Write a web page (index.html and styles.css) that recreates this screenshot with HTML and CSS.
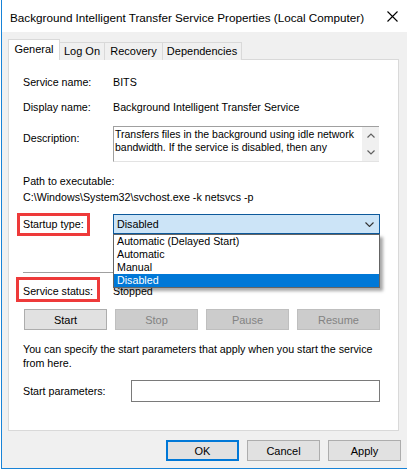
FILE: index.html
```html
<!DOCTYPE html>
<html>
<head>
<meta charset="utf-8">
<link rel="stylesheet" href="styles.css">
</head>
<body>
<div class="window">
  <div class="titlebar">
    <span class="title">Background Intelligent Transfer Service Properties (Local Computer)</span>
    <svg class="close" width="11" height="11" viewBox="0 0 11 11"><path d="M0.5 0.5 L10.5 10.5 M10.5 0.5 L0.5 10.5" stroke="#000" stroke-width="1.1" fill="none"/></svg>
  </div>
  <div class="body">
    <div class="tabs">
      <div class="tab active">General</div>
      <div class="tab t-logon">Log On</div>
      <div class="tab t-recovery">Recovery</div>
      <div class="tab t-deps">Dependencies</div>
    </div>
    <div class="panel">
      <div class="row r-name"><span class="label">Service name:</span><span>BITS</span></div>
      <div class="row r-display"><span class="label">Display name:</span><span>Background Intelligent Transfer Service</span></div>
      <div class="row r-desc">
        <span class="label desc-label">Description:</span>
        <div class="desc-box">
          <div class="desc-text">Transfers files in the background using idle network bandwidth. If the service is disabled, then any</div>
          <div class="scrollbar">
            <svg width="8" height="5" viewBox="0 0 8 5"><path d="M0.5 4.5 L4 1 L7.5 4.5" stroke="#606060" stroke-width="1.2" fill="none"/></svg>
            <svg width="8" height="5" viewBox="0 0 8 5"><path d="M0.5 0.5 L4 4 L7.5 0.5" stroke="#606060" stroke-width="1.2" fill="none"/></svg>
          </div>
        </div>
      </div>
      <div class="path-label">Path to executable:</div>
      <div class="path-value">C:\Windows\System32\svchost.exe -k netsvcs -p</div>
      <div class="row r-startup">
        <span class="label"><span class="hl">Startup type:<span class="mark mark-startup"></span></span></span>
        <div class="combo-wrap">
          <div class="combo">
            <span>Disabled</span>
            <svg width="9" height="5" viewBox="0 0 9 5"><path d="M0.5 0.5 L4.5 4.5 L8.5 0.5" stroke="#333" stroke-width="1.1" fill="none"/></svg>
          </div>
          <ul class="dropdown">
            <li>Automatic (Delayed Start)</li>
            <li>Automatic</li>
            <li>Manual</li>
            <li class="sel">Disabled</li>
          </ul>
        </div>
      </div>
      <div class="separator"></div>
      <div class="row r-status"><span class="label"><span class="hl">Service status:<span class="mark mark-status"></span></span></span><span>Stopped</span></div>
      <div class="svc-buttons">
        <button class="btn">Start</button>
        <button class="btn disabled">Stop</button>
        <button class="btn disabled">Pause</button>
        <button class="btn disabled">Resume</button>
      </div>
      <p class="hint">You can specify the start parameters that apply when you start the service from here.</p>
      <div class="row r-params"><span class="label params-label">Start parameters:</span><div class="input"></div></div>
    </div>
    <div class="footer">
      <button class="btn dlg default">OK</button>
      <button class="btn dlg">Cancel</button>
      <button class="btn dlg">Apply</button>
    </div>
  </div>
</div>
</body>
</html>
```
FILE: styles.css
```css
* { box-sizing: border-box; }
html, body { margin: 0; padding: 0; background: #ffffff; }
body {
  font-family: "Liberation Sans", Arial, sans-serif;
  font-size: 10.7px;
  color: #000;
  width: 407px;
  height: 470px;
  overflow: hidden;
}
.window {
  margin-left: 1px;
  width: 406px;
  border-left: 1px solid #1883d7;
  border-bottom: 1px solid #1883d7;
}
.titlebar {
  height: 32px;
  background: #fff;
  display: flex;
  align-items: center;
  padding-left: 8px;
  padding-top: 2px;
}
.title { font-size: 11.7px; flex: 1; color: #000; white-space: nowrap; }
.close { margin-right: 9px; margin-top: -1px; flex: none; }

.body {
  background: #f0f0f0;
  height: 436px;
  padding: 7px 0 0 6px;
}
.tabs {
  display: flex;
  align-items: flex-end;
  height: 21px;
  position: relative;
  z-index: 1;
  margin-bottom: -1px;
}
.tab {
  height: 18px;
  border: 1px solid #d9d9d9;
  border-bottom: none;
  border-left: none;
  background: #f0f0f0;
  line-height: 17px;
  text-align: center;
  font-size: 11px;
}
.tab.active {
  height: 21px;
  width: 52px;
  border-left: 1px solid #d9d9d9;
  background: #fff;
  line-height: 19px;
}
.t-logon { width: 45px; }
.t-recovery { width: 58px; }
.t-deps { width: 79px; }

.panel {
  width: 391px;
  height: 372px;
  background: #fff;
  border: 1px solid #d9d9d9;
  padding: 14px 0 0 14px;
}
.row { display: flex; align-items: flex-start; line-height: 16px; }
.label { width: 90px; flex: none; }
.r-display { margin-top: 9px; }
.r-desc { margin-top: 11px; }
.desc-label { padding-top: 4px; }
.desc-box {
  width: 266px;
  height: 36px;
  border: 1px solid #a0a0a0;
  border-right: none;
  border-bottom-color: #e3e3e3;
  display: flex;
}
.desc-text {
  flex: 1;
  height: 26px;
  margin-top: 1px;
  padding: 0 0 0 1px;
  line-height: 13px;
  font-size: 10.5px;
  overflow: hidden;
}
.scrollbar {
  width: 17px;
  flex: none;
  background: #f0f0f0;
  display: flex;
  flex-direction: column;
  align-items: center;
  justify-content: space-between;
  padding: 6px 0 6px;
}
.scrollbar svg { display: block; }
.path-label { margin-top: 11px; line-height: 16px; }
.path-value { line-height: 16px; }

.r-startup { margin-top: 9px; line-height: 20px; }
.hl { position: relative; display: inline-block; }
.mark {
  position: absolute;
  border: 3px solid #ee3a3a;
  pointer-events: none;
}
.mark-startup { left: -6px; top: -1px; width: 73px; height: 23px; }
.mark-status { left: -7px; top: -6px; width: 84px; height: 25px; }
.combo-wrap { position: relative; }
.combo {
  width: 267px;
  height: 20px;
  background: #cce4f7;
  border: 1px solid #0e5a9c;
  display: flex;
  align-items: center;
  justify-content: space-between;
  padding: 0 5px 0 3px;
  line-height: 18px;
}
.dropdown {
  position: absolute;
  left: 0;
  top: 20px;
  width: 267px;
  margin: 0;
  padding: 0;
  list-style: none;
  background: #fff;
  border: 1px solid #646464;
  box-shadow: 3px 3px 3px rgba(0,0,0,0.35);
  z-index: 5;
}
.dropdown li { height: 13px; line-height: 13px; padding-left: 3px; }
.dropdown li.sel { background: #0078d7; color: #fff; }

.separator {
  margin-top: 38px;
  width: 356px;
  height: 1px;
  background: #a0a0a0;
}
.r-status { margin-top: 10px; }

.svc-buttons {
  margin-top: 10px;
  margin-left: 1px;
  width: 356px;
  display: flex;
  justify-content: space-between;
}
.btn {
  font-family: "Liberation Sans", Arial, sans-serif;
  font-size: 11px;
  height: 21px;
  width: 83px;
  padding: 0;
  background: #e1e1e1;
  border: 1px solid #adadad;
  color: #000;
}
.btn.disabled { background: #cccccc; border-color: #bfbfbf; color: #838383; }
.hint { margin: 12px 0 0; line-height: 14px; width: 362px; }
.r-params { margin-top: 10px; align-items: center; }
.params-label { width: 108px; }
.input { width: 249px; height: 22px; border: 1px solid #7a7a7a; background: #fff; }

.footer {
  display: flex;
  justify-content: flex-end;
  gap: 8px;
  width: 393px;
  margin-top: 9px;
}
.btn.dlg { width: 73px; }
.btn.default { border: 2px solid #0078d7; }
```
